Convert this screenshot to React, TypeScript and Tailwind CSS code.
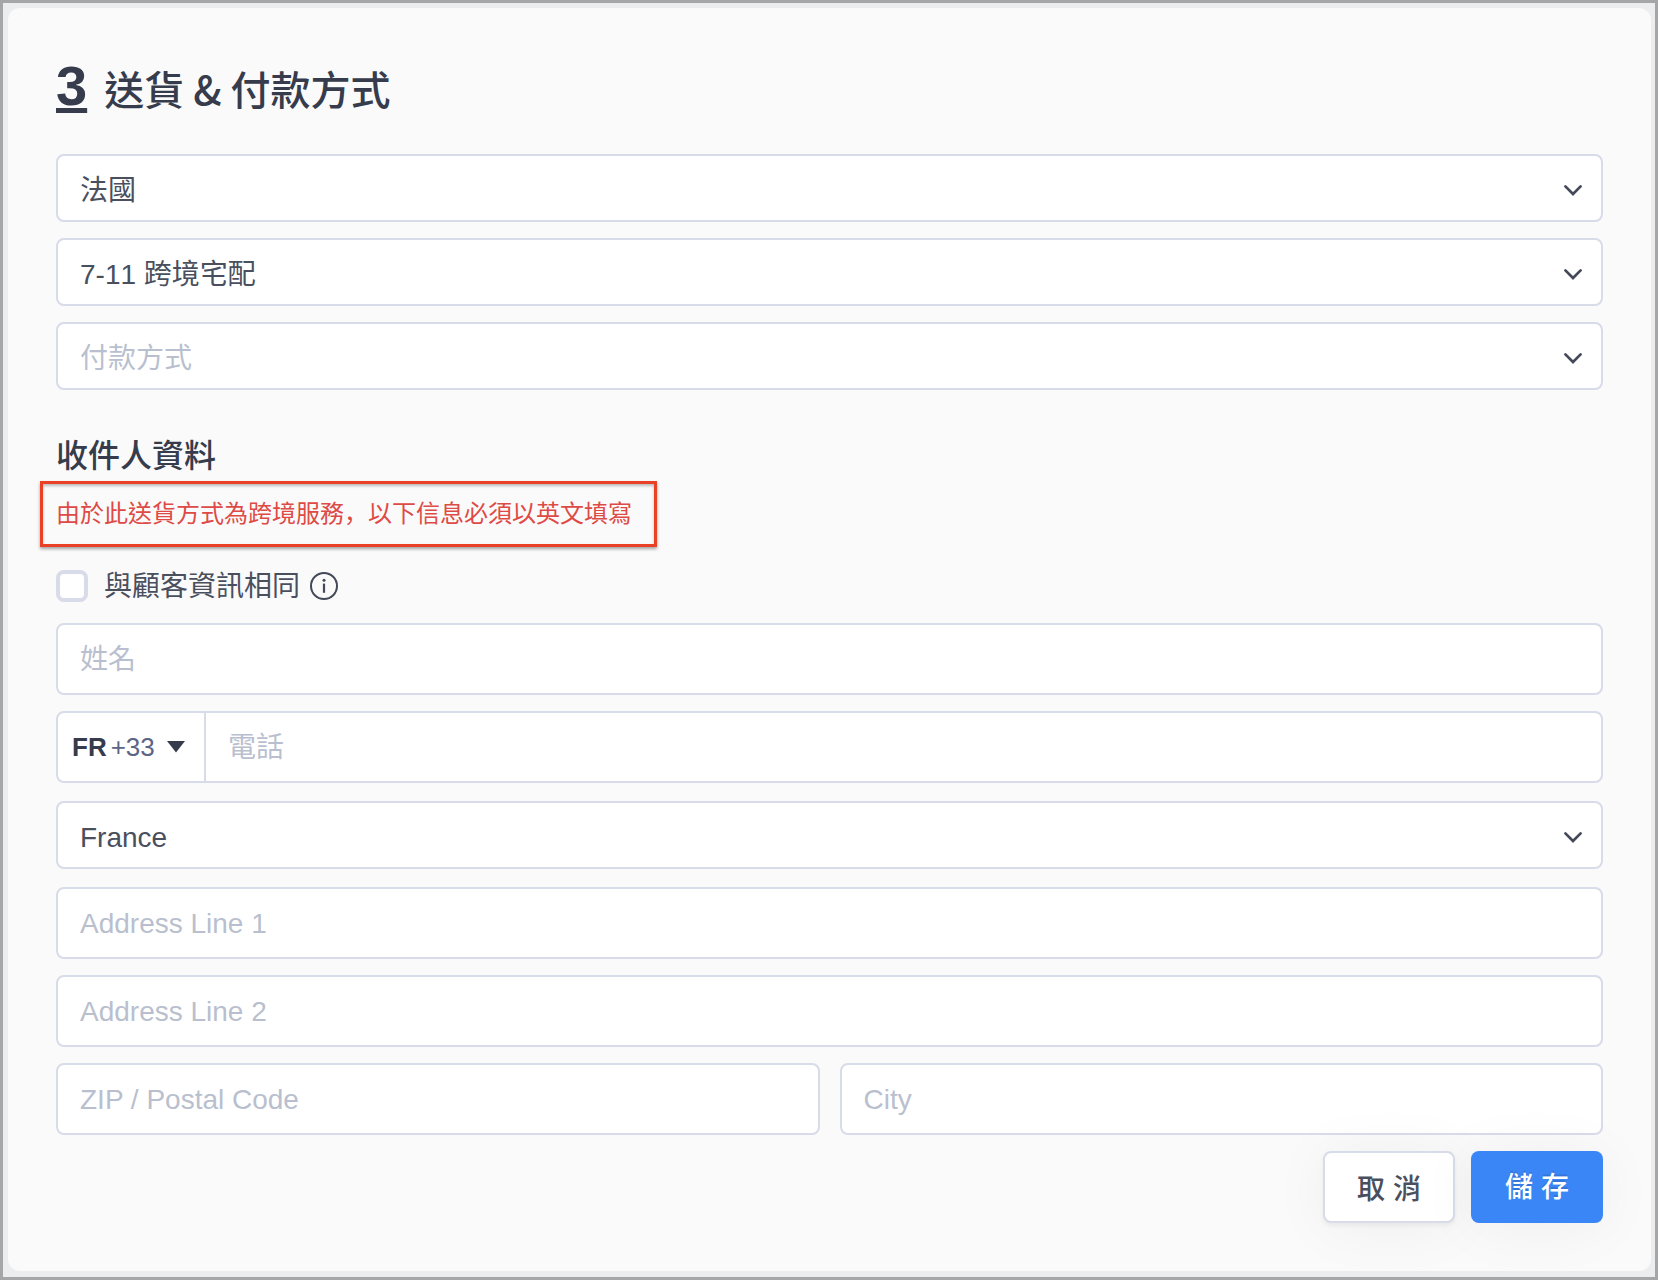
import { useId } from 'react';
import type { ReactNode } from 'react';
import clsx from 'clsx';

const control =
  'block w-full rounded-lg border-2 border-[#d8dbe8] bg-white px-[22px] text-[28px] leading-9 text-[#4a4f5e] outline-none focus:border-[#3b86f7]';

interface SelectFieldProps {
  label: string;
  options: string[];
  placeholder?: boolean;
}

function SelectField({ label, options, placeholder }: SelectFieldProps) {
  return (
    <div className="relative">
      <select
        aria-label={label}
        defaultValue={options[0]}
        className={clsx(
          control,
          'h-[68px] appearance-none pt-1.5 pr-16 [font-kerning:none]',
          placeholder && 'text-[#b9bfce]',
        )}
      >
        {options.map((option) => (
          <option key={option}>{option}</option>
        ))}
      </select>
      <svg
        className="pointer-events-none absolute right-5 top-7 h-4 w-5"
        viewBox="0 0 20 16"
        fill="none"
        stroke="#434958"
        strokeWidth="2.7"
        strokeLinecap="round"
      >
        <path d="M2.4 4.4 10 12l7.6-7.6" />
      </svg>
    </div>
  );
}

interface TextFieldProps {
  label: string;
  type?: string;
}

function TextField({ label, type = 'text' }: TextFieldProps) {
  return (
    <input
      type={type}
      aria-label={label}
      placeholder={label}
      className={clsx(control, 'h-[72px] pt-0.5 placeholder:text-[#b9bfce] placeholder:opacity-100')}
    />
  );
}

function PhoneField() {
  return (
    <div className="flex h-[72px] overflow-hidden rounded-lg border-2 border-[#d8dbe8] bg-white">
      <button
        type="button"
        aria-label="FR +33"
        className="flex w-[148px] shrink-0 items-center border-r-2 border-[#d8dbe8] pl-3.5 text-[26px]"
      >
        <span className="font-bold text-[#363c4c]">FR</span>
        <span className="ml-1 text-[#5c6484]">+33</span>
        <svg className="ml-3 h-3 w-[18px]" viewBox="0 0 18 12" fill="#363c4c">
          <path d="M0 0h18L9 11.5z" />
        </svg>
      </button>
      <input
        type="tel"
        aria-label="電話"
        placeholder="電話"
        className="min-w-0 flex-1 px-[22px] pt-0.5 text-[28px] leading-9 text-[#4a4f5e] outline-none placeholder:text-[#b9bfce] placeholder:opacity-100"
      />
    </div>
  );
}

function InfoIcon() {
  return (
    <svg className="h-7 w-7" viewBox="0 0 28 28" fill="none" stroke="#434958">
      <circle cx="14" cy="14" r="13" strokeWidth="2" />
      <circle cx="14" cy="8.2" r="1.5" fill="#434958" stroke="none" />
      <path d="M14 11.6v9.2" strokeWidth="2.2" />
    </svg>
  );
}

interface ActionButtonProps {
  primary?: boolean;
  children: ReactNode;
}

function ActionButton({ primary, children }: ActionButtonProps) {
  return (
    <button
      type="button"
      className={clsx(
        'h-[72px] w-[132px] rounded-lg text-[28px] font-medium leading-9',
        primary
          ? 'bg-[#3b86f7] pt-0.5 text-white shadow-[0_4px_60px_rgba(0,0,0,0.05)] [text-shadow:0_-2px_0_rgba(0,0,0,0.12)]'
          : 'border-2 border-[#d8dbe8] bg-white pt-1.5 text-[#4a4f5e] shadow-[0_3px_4px_rgba(0,0,0,0.05),0_4px_60px_rgba(0,0,0,0.05)]',
      )}
    >
      {children}
    </button>
  );
}

export default function App() {
  const sameId = useId();

  return (
    <div
      lang="zh-Hant"
      className="flex min-h-screen flex-col border-3 border-[#a5a6a8] bg-[#ecedef] pt-[5px] pr-1 pb-1.5 pl-[5px] font-['Liberation_Sans','Noto_Sans_CJK_SC',sans-serif]"
    >
      <form className="flex-1 rounded-xl bg-[#fafafa] px-12 pt-[46px] pb-12">
        <h2 className="flex h-16 items-baseline gap-[17px] text-[#363c4c]">
          <span className="text-[56px] font-bold leading-16 underline decoration-[5px] underline-offset-[3px] [text-decoration-skip-ink:none]">
            3
          </span>
          <span className="font-['Noto_Sans_CJK_SC',sans-serif] text-[40px] font-medium leading-12">
            送貨 &amp; 付款方式
          </span>
        </h2>

        <div className="mt-9 flex flex-col gap-4">
          <SelectField label="送貨地點" options={['法國']} />
          <SelectField label="送貨方式" options={['7-11 跨境宅配']} />
          <SelectField label="付款方式" options={['付款方式']} placeholder />
        </div>

        <h3 className="mt-[46px] text-[32px] font-medium leading-10 text-[#363c4c]">收件人資料</h3>

        {/* Cross-border notice */}
        <p className="-ml-4 mt-[5px] w-fit border-3 border-[#ea4025] py-3 pr-[22px] pl-[13px] text-[24px] leading-9 text-[#de4a45] shadow-[0_2px_3px_rgba(0,0,0,0.35),inset_0_2px_3px_rgba(0,0,0,0.25)]">
          由於此送貨方式為跨境服務<span lang="zh-Hans">，</span>以下信息必須以英文填寫
        </p>

        <div className="mt-[23px] flex h-8 items-center">
          <input
            id={sameId}
            type="checkbox"
            className="h-8 w-8 shrink-0 appearance-none rounded-lg border-4 border-[#d8dbe8] bg-white checked:bg-[#3b86f7]"
          />
          <label htmlFor={sameId} className="ml-4 pt-0.5 text-[28px] leading-8 text-[#4a4f5e]">
            與顧客資訊相同
          </label>
          <button type="button" aria-label="與顧客資訊相同" className="ml-2.5">
            <InfoIcon />
          </button>
        </div>

        <div className="mt-[21px] flex flex-col gap-4">
          <TextField label="姓名" />
          <PhoneField />
        </div>
        <div className="my-[18px]">
          <SelectField label="國家" options={['France']} />
        </div>
        <div className="flex flex-col gap-4">
          <TextField label="Address Line 1" />
          <TextField label="Address Line 2" />
          <div className="grid grid-cols-2 gap-5">
            <TextField label="ZIP / Postal Code" />
            <TextField label="City" />
          </div>
          <div className="flex justify-end gap-4">
            <ActionButton>取 消</ActionButton>
            <ActionButton primary>儲 存</ActionButton>
          </div>
        </div>
      </form>
    </div>
  );
}
